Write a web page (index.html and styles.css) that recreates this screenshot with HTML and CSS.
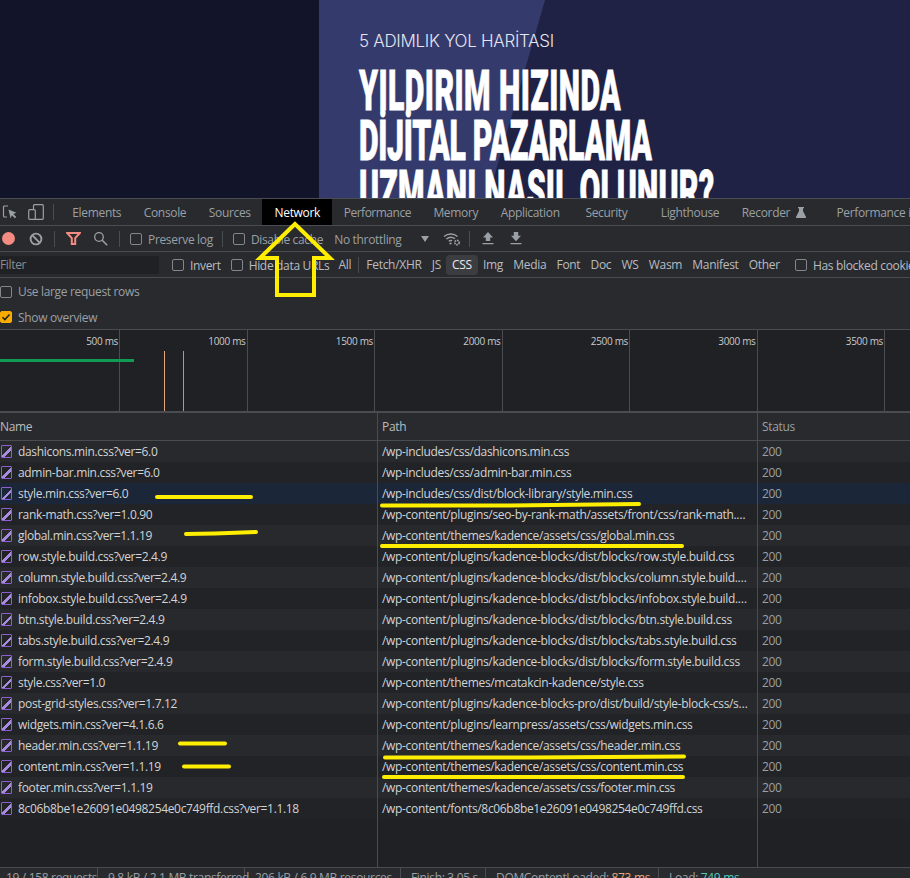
FILE: index.html
```html
<!DOCTYPE html>
<html lang="en">
<head>
    <meta charset="UTF-8">
    <meta name="viewport" content="width=device-width, initial-scale=1.0">
    <title>Network panel</title>
    <link rel="stylesheet" href="styles.css">
</head>
<body>
    <!-- Page being inspected -->
    <section class="hero">
        <div class="hero-side"></div>
        <div class="hero-panel">
            <div class="hero-text">
                <p class="hero-kicker">5 ADIMLIK YOL HARİTASI</p>
                <h1 class="hero-title"><span class="line-a">YILDIRIM HIZINDA</span><span class="line-b">DİJİTAL PAZARLAMA</span><span class="line-c">UZMANI NASIL OLUNUR?</span></h1>
            </div>
            <svg class="hero-dots" width="23" height="48" viewBox="0 0 23 48" fill="#f0f0f8">
                <circle cx="2" cy="2" r="2"/><circle cx="21" cy="2" r="2"/>
                <circle cx="2" cy="24" r="2"/><circle cx="21" cy="24" r="2"/>
                <circle cx="2" cy="46" r="2"/><circle cx="21" cy="46" r="2"/>
            </svg>
        </div>
    </section>

    <section class="devtools">
        <!-- Tabs -->
        <div class="tabs">
            <span class="tab-icon inspect">
                <svg width="16" height="16" viewBox="0 0 16 16" fill="none"><path d="M6 2H2.500a1 1 0 0 0-1 1v9a1 1 0 0 0 1 1H5" stroke="#9aa0a6" stroke-width="1.200"/><path d="M6.500 5.500l8 3.200-3.200 1.200 3 3-1.400 1.400-3-3-1.300 3.200z" fill="#9aa0a6"/></svg>
            </span>
            <span class="tab-icon device">
                <svg width="16" height="16" viewBox="0 0 16 16" fill="none"><rect x="5.500" y="0.700" width="9.800" height="14.600" rx="1" stroke="#9aa0a6" stroke-width="1.200"/><rect x="0.700" y="5.700" width="6.600" height="9.600" rx="1" fill="#292a2d" stroke="#9aa0a6" stroke-width="1.200"/></svg>
            </span>
            <span class="vsep tabs-sep"></span>
            <span class="tab">Elements</span>
            <span class="tab">Console</span>
            <span class="tab">Sources</span>
            <span class="tab active">Network</span>
            <span class="tab tab-perf">Performance</span>
            <span class="tab">Memory</span>
            <span class="tab">Application</span>
            <span class="tab tab-security">Security</span>
            <span class="tab wide">Lighthouse</span>
            <span class="tab">Recorder
                <svg class="flask" width="10" height="11" viewBox="0 0 10 11"><path d="M2 0h6v1.300H7V4l3 6a.7.7 0 0 1-.6 1H.6A.7.7 0 0 1 0 10l3-6V1.300H2z" fill="#9aa0a6"/></svg>
            </span>
            <span class="tab tab-insights">Performance insights</span>
        </div>

        <!-- Toolbar -->
        <div class="toolbar">
            <span class="record"></span>
            <svg class="clear-btn" width="14" height="14" viewBox="0 0 14 14" fill="none"><circle cx="7" cy="7" r="5.400" stroke="#9aa0a6" stroke-width="1.900"/><path d="M3.200 3.200l7.600 7.600" stroke="#9aa0a6" stroke-width="1.900"/></svg>
            <span class="vsep sep-a"></span>
            <svg class="funnel" width="15" height="13" viewBox="0 0 15 13" fill="none"><path d="M1.200 1h12.600l-4.600 5.200V12H5.800V6.200z" stroke="#f28b82" stroke-width="2"/></svg>
            <svg class="search" width="15" height="15" viewBox="0 0 15 15" fill="none"><circle cx="6" cy="6" r="4.300" stroke="#9aa0a6" stroke-width="1.300"/><path d="M9.200 9.200l5 5" stroke="#9aa0a6" stroke-width="1.600"/></svg>
            <span class="vsep sep-b"></span>
            <label class="check preserve"><span class="box"></span><span class="label-text">Preserve log</span></label>
            <span class="vsep sep-c"></span>
            <label class="check disable"><span class="box"></span><span class="label-text">Disable cache</span></label>
            <span class="throttle label-text">No throttling</span>
            <span class="caret"></span>
            <svg class="wifi" width="18" height="14" viewBox="0 0 18 14" fill="none"><path d="M1 4.500a10.500 10.500 0 0 1 13.500 0M3.400 7a7 7 0 0 1 8.500-.4M5.800 9.200a3.600 3.600 0 0 1 3.400-.5" stroke="#9aa0a6" stroke-width="1.400"/><circle cx="7.500" cy="11.500" r="1.100" fill="#9aa0a6"/><circle cx="14" cy="10.500" r="2.200" stroke="#9aa0a6" stroke-width="1.600" stroke-dasharray="1.600 .7"/></svg>
            <span class="vsep sep-d"></span>
            <svg class="arrow-up" width="12" height="13" viewBox="0 0 12 13"><path d="M6 0l5 5.500H8.200V9H3.800V5.500H1zM0.500 11h11v1.300h-11z" fill="#9aa0a6"/></svg>
            <svg class="arrow-down" width="12" height="13" viewBox="0 0 12 13"><path d="M3.800 0h4.400v3.800H11L6 9.300 1 3.800h2.800zM0.500 11h11v1.300h-11z" fill="#9aa0a6"/></svg>
        </div>

        <!-- Filter bar -->
        <div class="filterbar">
            <span class="filter-input">Filter</span>
            <label class="check invert"><span class="box"></span>Invert</label>
            <label class="check hide-urls"><span class="box"></span>Hide data URLs</label>
            <span class="chip chip-all">All</span>
            <span class="vsep chip-sep"></span>
            <span class="chip">Fetch/XHR</span>
            <span class="chip">JS</span>
            <span class="chip selected">CSS</span>
            <span class="chip">Img</span>
            <span class="chip">Media</span>
            <span class="chip">Font</span>
            <span class="chip">Doc</span>
            <span class="chip">WS</span>
            <span class="chip">Wasm</span>
            <span class="chip">Manifest</span>
            <span class="chip">Other</span>
            <label class="check blocked"><span class="box"></span>Has blocked cookies</label>
        </div>

        <!-- Settings -->
        <div class="settings">
            <label class="check"><span class="box"></span>Use large request rows</label>
            <label class="check"><span class="box on"><svg width="10" height="10" viewBox="0 0 10 10" fill="none"><path d="M1.500 5.200l2.400 2.400 4.600-5" stroke="#202124" stroke-width="1.500"/></svg></span>Show overview</label>
        </div>

        <!-- Timeline overview -->
        <div class="overview">
            <div class="ticks">
                <span class="tick">500 ms</span>
                <span class="tick">1000 ms</span>
                <span class="tick">1500 ms</span>
                <span class="tick">2000 ms</span>
                <span class="tick">2500 ms</span>
                <span class="tick">3000 ms</span>
                <span class="tick">3500 ms</span>
            </div>
            <span class="bar-green"></span>
            <span class="marker marker-dcl"></span>
            <span class="marker marker-load"></span>
        </div>

        <!-- Requests -->
        <div class="requests">
            <div class="row head"><div>Name</div><div>Path</div><div>Status</div></div>
            <div class="row"><div><i class="file"></i>dashicons.min.css?ver=6.0</div><div>/wp-includes/css/dashicons.min.css</div><div>200</div></div>
            <div class="row"><div><i class="file"></i>admin-bar.min.css?ver=6.0</div><div>/wp-includes/css/admin-bar.min.css</div><div>200</div></div>
            <div class="row hover"><div><i class="file"></i>style.min.css?ver=6.0</div><div>/wp-includes/css/dist/block-library/style.min.css</div><div>200</div></div>
            <div class="row"><div><i class="file"></i>rank-math.css?ver=1.0.90</div><div>/wp-content/plugins/seo-by-rank-math/assets/front/css/rank-math.css?ver=1.0.90</div><div>200</div></div>
            <div class="row"><div><i class="file"></i>global.min.css?ver=1.1.19</div><div>/wp-content/themes/kadence/assets/css/global.min.css</div><div>200</div></div>
            <div class="row"><div><i class="file"></i>row.style.build.css?ver=2.4.9</div><div>/wp-content/plugins/kadence-blocks/dist/blocks/row.style.build.css</div><div>200</div></div>
            <div class="row"><div><i class="file"></i>column.style.build.css?ver=2.4.9</div><div>/wp-content/plugins/kadence-blocks/dist/blocks/column.style.build.css?ver=2.4.9</div><div>200</div></div>
            <div class="row"><div><i class="file"></i>infobox.style.build.css?ver=2.4.9</div><div>/wp-content/plugins/kadence-blocks/dist/blocks/infobox.style.build.css?ver=2.4.9</div><div>200</div></div>
            <div class="row"><div><i class="file"></i>btn.style.build.css?ver=2.4.9</div><div>/wp-content/plugins/kadence-blocks/dist/blocks/btn.style.build.css</div><div>200</div></div>
            <div class="row"><div><i class="file"></i>tabs.style.build.css?ver=2.4.9</div><div>/wp-content/plugins/kadence-blocks/dist/blocks/tabs.style.build.css</div><div>200</div></div>
            <div class="row"><div><i class="file"></i>form.style.build.css?ver=2.4.9</div><div>/wp-content/plugins/kadence-blocks/dist/blocks/form.style.build.css</div><div>200</div></div>
            <div class="row"><div><i class="file"></i>style.css?ver=1.0</div><div>/wp-content/themes/mcatakcin-kadence/style.css</div><div>200</div></div>
            <div class="row"><div><i class="file"></i>post-grid-styles.css?ver=1.7.12</div><div>/wp-content/plugins/kadence-blocks-pro/dist/build/style-block-css/style-block.css</div><div>200</div></div>
            <div class="row"><div><i class="file"></i>widgets.min.css?ver=4.1.6.6</div><div>/wp-content/plugins/learnpress/assets/css/widgets.min.css</div><div>200</div></div>
            <div class="row"><div><i class="file"></i>header.min.css?ver=1.1.19</div><div>/wp-content/themes/kadence/assets/css/header.min.css</div><div>200</div></div>
            <div class="row"><div><i class="file"></i>content.min.css?ver=1.1.19</div><div>/wp-content/themes/kadence/assets/css/content.min.css</div><div>200</div></div>
            <div class="row"><div><i class="file"></i>footer.min.css?ver=1.1.19</div><div>/wp-content/themes/kadence/assets/css/footer.min.css</div><div>200</div></div>
            <div class="row"><div><i class="file"></i>8c06b8be1e26091e0498254e0c749ffd.css?ver=1.1.18</div><div>/wp-content/fonts/8c06b8be1e26091e0498254e0c749ffd.css</div><div>200</div></div>
            <div class="row filler"><div></div><div></div><div></div></div>
        </div>

        <!-- Summary -->
        <div class="summary">
            <span class="stat s1">19 / 158 requests</span>
            <span class="stat s2">9.8 kB / 2.1 MB transferred</span>
            <span class="stat s3">206 kB / 6.9 MB resources</span>
            <span class="stat s4">Finish: 3.05 s</span>
            <span class="stat s5">DOMContentLoaded: <b class="orange">873 ms</b></span>
            <span class="stat s6">Load: <b class="teal">749 ms</b></span>
        </div>
    </section>

    <!-- Yellow marks drawn on top of the screenshot -->
    <svg class="marks" width="910" height="878" viewBox="0 0 910 878" fill="none">
        <path d="M295 224L260 258H277V295H314V258H330Z" stroke="#ffee00" stroke-width="4"/>
        <g stroke="#ffee00" stroke-width="4" stroke-linecap="round">
            <path d="M157 497H251"/>
            <path d="M186 534L215 533.500 256 532"/>
            <path d="M180 743.500H225"/>
            <path d="M184 766.500H229"/>
            <path d="M382 505.500H510L639 504"/>
            <path d="M382 546H682"/>
            <path d="M385 757.500H530L684 756.500"/>
            <path d="M384 777H683"/>
        </g>
    </svg>
</body>
</html>
```

FILE: styles.css
```css
* {
    margin: 0;
    padding: 0;
    box-sizing: border-box;
}

html, body {
    height: 878px;
    overflow: hidden;
}

body {
    position: relative;
    display: flex;
    flex-direction: column;
    background: #292a2d;
    color: #b9bcc0;
    font-family: "Open Sans", "Liberation Sans", sans-serif;
    font-size: 12px;
    letter-spacing: -0.33px;
}

/* Inspected page */
.hero {
    flex: 0 0 198px;
    display: flex;
    overflow: hidden;
    background: #12152a;
}

.hero-side {
    flex: 0 0 319px;
}

.hero-panel {
    flex: 1;
    position: relative;
    display: flex;
    padding: 25px 20px 0 40px;
    background: #1f2244;
}

.hero-panel::before {
    content: "";
    position: absolute;
    inset: 0;
    background: #353a6c;
    clip-path: polygon(0 0, 226px 0, 169px 198px, 0 198px);
}

.hero-text {
    position: relative;
    flex: 0 0 400px;
    padding-top: 2px;
    color: #fff;
}

.hero-kicker {
    font-family: Inter, sans-serif;
    font-size: 17px;
    font-weight: 300;
    line-height: 28px;
    letter-spacing: -0.3px;
    color: #e4e5f0;
    white-space: nowrap;
}

.hero-title {
    margin-top: 11px;
    font-family: Roboto, sans-serif;
    font-size: 56px;
    font-weight: 900;
    line-height: 50px;
    white-space: nowrap;
    -webkit-text-stroke: 0.8px #fff;
    transform: scaleX(0.54);
    transform-origin: left top;
}

.hero-title span {
    display: block;
}

.line-a { letter-spacing: 0.8px; }
.line-b { letter-spacing: -0.55px; }
.line-c { letter-spacing: 0.37px; }

.hero-dots {
    position: relative;
    flex: none;
    margin-left: auto;
}

.devtools {
    flex: 1;
    display: flex;
    flex-direction: column;
    min-height: 0;
}

.vsep {
    flex: none;
    width: 1px;
    height: 16px;
    background: #494c50;
}

/* Tabs */
.tabs {
    flex: 0 0 28px;
    display: flex;
    align-items: stretch;
    border-top: 1px solid #494c50;
    border-bottom: 1px solid #494c50;
    white-space: nowrap;
    overflow: hidden;
}

.tabs > * {
    flex: none;
}

.tab-icon {
    display: flex;
    align-items: center;
}

.inspect {
    margin-left: 2px;
    width: 26px;
}

.device {
    width: 25px;
}

.tabs-sep {
    align-self: center;
    margin-right: 7px;
}

.tab {
    display: flex;
    align-items: center;
    padding: 0 11.250px;
    color: #9aa0a6;
}

.tab.wide {
    padding-left: 22px;
}

.tab.active {
    padding: 0 12.500px;
    background: #000;
    color: #fff;
}

.tab-perf {
    letter-spacing: -0.5px;
}

.tab-security {
    padding-left: 14.500px;
}

.tab-insights {
    padding-left: 19px;
}

.flask {
    margin-left: 6px;
}

/* Toolbar */
.toolbar {
    flex: 0 0 26px;
    display: flex;
    align-items: center;
    border-bottom: 1px solid #494c50;
    color: #9aa0a6;
    white-space: nowrap;
}

.label-text {
    padding-top: 2px;
}

.record {
    flex: none;
    width: 13px;
    height: 13px;
    margin-left: 2px;
    border-radius: 50%;
    background: #f28b82;
}

.clear-btn { margin-left: 14px; }
.sep-a { margin-left: 11px; }
.funnel { margin-left: 11px; }
.search { margin-left: 12px; }
.sep-b { margin-left: 11px; }
.preserve { margin-left: 10px; }
.sep-c { margin-left: 9px; }
.disable { margin-left: 10px; }
.throttle { margin-left: 11px; }
.caret {
    margin-left: 19px;
    border: 4px solid transparent;
    border-top: 6px solid #9aa0a6;
    border-bottom: 0;
}
.wifi { margin-left: 14px; }
.sep-d { margin-left: 8px; }
.arrow-up { margin-left: 12px; }
.arrow-down { margin-left: 16px; }

.check {
    display: flex;
    align-items: center;
    gap: 6px;
    white-space: nowrap;
}

.box {
    flex: none;
    display: flex;
    align-items: center;
    justify-content: center;
    width: 12px;
    height: 12px;
    border: 1px solid #83868b;
    border-radius: 2px;
}

.box.on {
    background: #f9ab00;
    border-color: #f9ab00;
}

/* Filter bar */
.filterbar {
    flex: 0 0 26px;
    display: flex;
    align-items: center;
    padding-top: 1px;
    border-bottom: 1px solid #494c50;
    white-space: nowrap;
}

.filterbar > * {
    flex: none;
}

.filter-input {
    width: 159px;
    height: 18px;
    line-height: 18px;
    background: #202124;
    color: #8b8e92;
}

.invert { margin-left: 13px; }
.hide-urls { margin-left: 10px; }

.chip {
    padding: 0 5.100px;
    height: 20px;
    line-height: 20px;
    border-radius: 4px;
    letter-spacing: -0.3px;
}

.chip-all { margin-left: 4px; }
.chip-sep { margin: 0 2px; }

.chip.selected {
    padding: 0 6px;
    background: #3c3d41;
    color: #e8eaed;
}

.blocked { margin-left: 10px; }

/* Settings */
.settings {
    flex: 0 0 52px;
    display: flex;
    flex-direction: column;
    color: #9aa0a6;
    border-bottom: 1px solid #494c50;
}

.settings .check {
    flex: 1;
    padding-top: 2px;
}

/* Overview */
.overview {
    flex: 0 0 83px;
    position: relative;
    overflow: hidden;
    background: #202124;
    border-bottom: 2px solid #494c50;
}

.ticks {
    display: flex;
    height: 100%;
    margin-left: -7.500px;
}

.tick {
    flex: 0 0 127.500px;
    padding: 4px 1px 0 0;
    text-align: right;
    font-size: 10px;
    color: #c8cacd;
    border-right: 1px solid #494c50;
}

.bar-green {
    position: absolute;
    left: 0;
    top: 29px;
    width: 134px;
    height: 3px;
    background: #109a55;
}

.marker {
    position: absolute;
    top: 21px;
    bottom: 0;
    width: 1px;
}

.marker-dcl { left: 164px; background: #e6a77c; }
.marker-load { left: 183px; background: #45c4b8; }

/* Requests table */
.requests {
    flex: 1;
    display: flex;
    flex-direction: column;
    min-height: 0;
    background: #202124;
}

.row {
    flex: 0 0 21px;
    display: grid;
    grid-template-columns: 378px 380px 1fr;
    line-height: 21px;
    color: #d2d4d6;
}

.row > div {
    padding: 0 6px 0 4px;
    overflow: hidden;
    white-space: nowrap;
    text-overflow: ellipsis;
    border-right: 1px solid #494c50;
}

.row > div:first-child {
    display: flex;
    align-items: center;
    padding-left: 1px;
}

.row > div:last-child {
    border-right: 0;
    color: #9aa0a6;
}

.row:nth-child(even) { background: #28292c; }
.row:nth-child(odd) { background: #222326; }

.row.head {
    flex-basis: 28px;
    line-height: 27px;
    background: #292a2d;
    border-bottom: 1px solid #494c50;
    color: #b9bcc0;
}

.row.head > div:first-child {
    padding-left: 0;
}

.row.hover {
    background: #1b2638;
}

.row.filler {
    flex: 1;
    background: #202124;
}

.file {
    flex: none;
    width: 11px;
    height: 13px;
    margin-right: 6px;
    border: 1px solid #8e5fd0;
    border-radius: 1px;
    background: linear-gradient(135deg, transparent 50%, #a98be0 50%, #a98be0 66%, transparent 66%);
}

/* Summary bar */
.summary {
    flex: 0 0 11px;
    min-height: 0;
    overflow: hidden;
    display: flex;
    border-top: 1px solid #494c50;
    color: #9aa0a6;
    white-space: nowrap;
}

.stat {
    flex: none;
    height: 20px;
    padding: 1px 0 0 10px;
    border-right: 1px solid #494c50;
}

.s1 { width: 98px; padding-left: 6px; }
.s2 { width: 147px; }
.s3 { width: 156px; }
.s4 { width: 85px; }
.s5 { width: 173px; }
.s6 { border-right: 0; }

.orange { color: #e6a77c; font-weight: 400; }
.teal { color: #4fc9bf; font-weight: 400; }

/* Yellow annotations on top of everything */
.marks {
    position: absolute;
    left: 0;
    top: 0;
    pointer-events: none;
}
```
